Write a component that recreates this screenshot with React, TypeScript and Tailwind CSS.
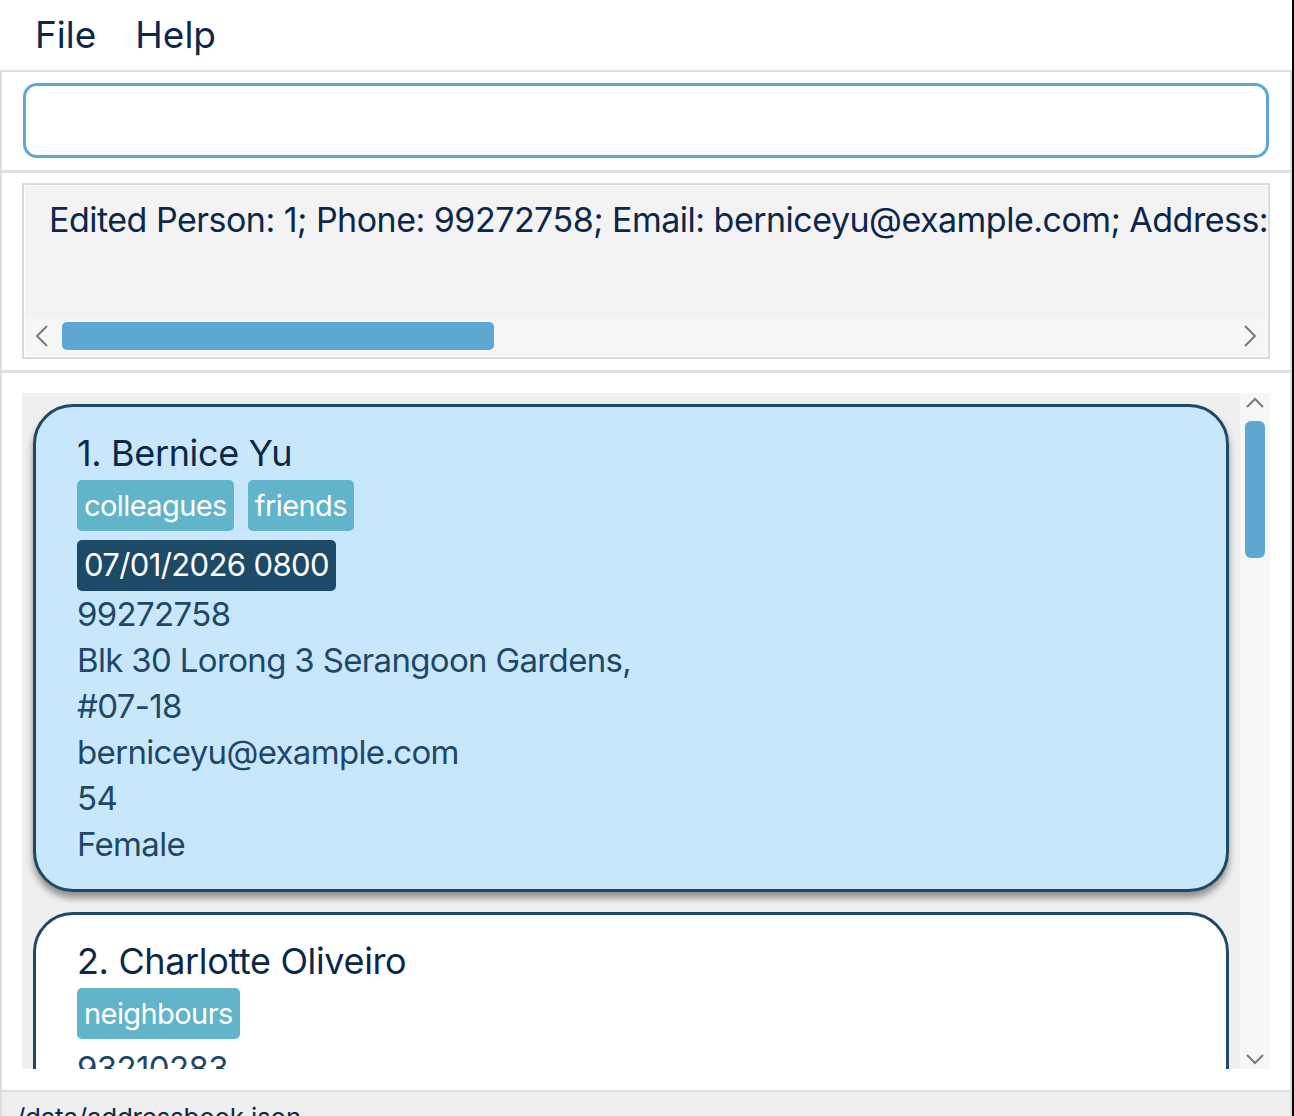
interface Person {
  id: number
  name: string
  tags: string[]
  appointment?: string
  phone: string
  address: string[]
  email: string
  age: string
  gender: string
  selected?: boolean
}

const people: Person[] = [
  {
    id: 1,
    name: 'Bernice Yu',
    tags: ['colleagues', 'friends'],
    appointment: '07/01/2026 0800',
    phone: '99272758',
    address: ['Blk 30 Lorong 3 Serangoon Gardens,', '#07-18'],
    email: 'berniceyu@example.com',
    age: '54',
    gender: 'Female',
    selected: true,
  },
  {
    id: 2,
    name: 'Charlotte Oliveiro',
    tags: ['neighbours'],
    phone: '93210283',
    address: ['Blk 11 Ang Mo Kio Street 74, #11-04'],
    email: 'charlotte@example.com',
    age: '32',
    gender: 'Female',
  },
]

// thin grey arrow used by the scroll bars
function Arrow({ dir }: { dir: 'left' | 'right' | 'up' | 'down' }) {
  if (dir === 'left' || dir === 'right') {
    return (
      <svg width="14" height="24" viewBox="0 0 14 24" className="shrink-0">
        <polyline
          points={dir === 'left' ? '12,2 2,12 12,22' : '2,2 12,12 2,22'}
          fill="none"
          stroke="#7a7a7a"
          strokeWidth="2"
        />
      </svg>
    )
  }
  return (
    <svg width="20" height="12" viewBox="0 0 20 12" className="shrink-0">
      <polyline
        points={dir === 'up' ? '2,10 10,2 18,10' : '2,2 10,10 18,2'}
        fill="none"
        stroke="#7a7a7a"
        strokeWidth="2"
      />
    </svg>
  )
}

function PersonCard({ person }: { person: Person }) {
  return (
    <div
      className={`shrink-0 border-[3px] border-[#1d4a68] rounded-[40px] pl-[41px] pt-[24px] pb-[22px] ${
        person.selected ? 'bg-[#c9e7fb] shadow-[0_6px_7px_rgba(0,0,0,0.4)]' : 'bg-white'
      }`}
    >
      <div className="text-[36px] leading-[44px] tracking-[-0.01em] text-[#0c2748]">
        {person.id}. {person.name}
      </div>
      <div className="flex gap-[14px] mt-[5px]">
        {person.tags.map(tag => (
          <span key={tag} className="h-[51px] flex items-center px-[7px] rounded-[5px] bg-[#62b4ca] text-white text-[29px] tracking-[-0.02em]">
            {tag}
          </span>
        ))}
      </div>
      {person.appointment ? (
        <div className="flex mt-[9px]">
          <span className="h-[51px] flex items-center px-[7px] rounded-[5px] bg-[#1d4a66] text-white text-[31px] tracking-[-0.02em]">
            {person.appointment}
          </span>
        </div>
      ) : (
        <div className="h-[6px]"></div>
      )}
      <div className="text-[33px] leading-[46px] tracking-[-0.02em] text-[#1f4766]">
        <div>{person.phone}</div>
        {person.address.map(line => (
          <div key={line}>{line}</div>
        ))}
        <div>{person.email}</div>
        <div>{person.age}</div>
        <div>{person.gender}</div>
      </div>
    </div>
  )
}

export default function App() {
  return (
    <div className="w-[1294px] h-[1116px] overflow-hidden bg-white border-r-2 border-black flex flex-col font-['Inter',sans-serif]">
      {/* menu bar */}
      <div className="h-[70px] shrink-0 flex items-center gap-[39px] pl-[35px] text-[37px] text-[#0c2748]">
        <span>File</span>
        <span>Help</span>
      </div>

      {/* command box */}
      <div className="h-[100px] shrink-0 border-t-[2px] border-x-2 border-[#dedede] pt-[11px] px-[21px]">
        <div className="h-[75px] border-[3px] border-[#5fa8d3] rounded-[14px] bg-white"></div>
      </div>

      {/* result display */}
      <div className="h-[200px] shrink-0 border-t-[3px] border-x-2 border-[#dedede] pt-[10px] px-[20px]">
        <div className="h-[176px] border-2 border-[#dadada] p-[1px]">
          <div className="h-full bg-[#f3f3f3] flex flex-col">
            <div className="flex-1 overflow-hidden whitespace-nowrap pl-[24px] pt-[12px] text-[34px] leading-[44px] tracking-[-0.015em] text-[#0c2748]">
              Edited Person: 1; Phone: 99272758; Email: berniceyu@example.com; Address: Blk 30 Lorong 3 Serangoon Gardens, #07-18
            </div>
            <div className="h-[38px] bg-[#f6f6f6] flex items-center pb-[2px]">
              <div className="ml-[10px]">
                <Arrow dir="left" />
              </div>
              <div className="ml-[13px] w-[432px] h-[28px] rounded-[5px] bg-[#5ea7d2]"></div>
              <div className="flex-1"></div>
              <div className="mr-[10px]">
                <Arrow dir="right" />
              </div>
            </div>
          </div>
        </div>
      </div>

      {/* person list */}
      <div className="h-[720px] shrink-0 border-t-[3px] border-x-2 border-[#dedede] pt-[20px] px-[20px]">
        <div className="h-[676px] bg-[#efefef] flex">
          <div className="flex-1 overflow-hidden flex flex-col gap-[20px] pt-[11px] px-[11px]">
            {people.map(p => (
              <PersonCard key={p.id} person={p} />
            ))}
          </div>
          <div className="w-[30px] bg-[#f6f6f6] flex flex-col items-center">
            <div className="mt-[4px]">
              <Arrow dir="up" />
            </div>
            <div className="w-[20px] h-[137px] rounded-[6px] bg-[#5ea7d2] mt-[12px]"></div>
            <div className="flex-1"></div>
            <div className="mb-[4px]">
              <Arrow dir="down" />
            </div>
          </div>
        </div>
      </div>

      {/* status bar */}
      <div className="flex-1 border-t-[2px] border-x-2 border-[#dedede] bg-[#efefef] pl-[14px] pt-[6px] text-[26px] leading-[40px] tracking-[-0.01em] text-[#0c2748]">
        /data/addressbook.json
      </div>
    </div>
  )
}
